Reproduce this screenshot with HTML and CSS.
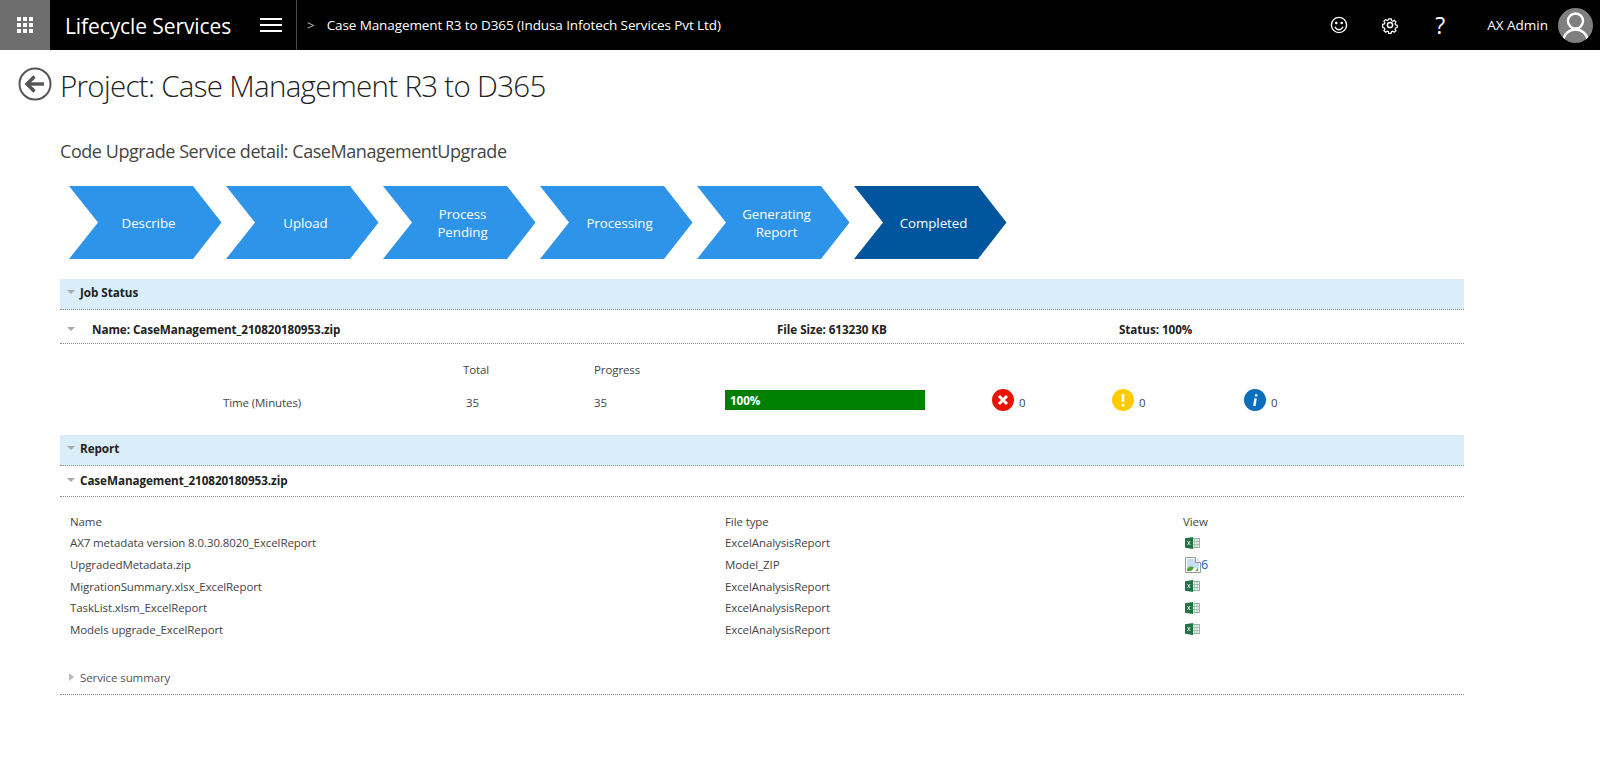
FILE: index.html
```html
<!DOCTYPE html>
<html lang="en">
<head>
<meta charset="utf-8">
<title>Lifecycle Services</title>
<link rel="stylesheet" href="styles.css">
</head>
<body>
<header class="topbar">
  <div class="tile">
    <svg width="16" height="16" viewBox="0 0 16 16" fill="#fff"><rect x="0" y="0" width="4" height="4"/><rect x="6" y="0" width="4" height="4"/><rect x="12" y="0" width="4" height="4"/><rect x="0" y="6" width="4" height="4"/><rect x="6" y="6" width="4" height="4"/><rect x="12" y="6" width="4" height="4"/><rect x="0" y="12" width="4" height="4"/><rect x="6" y="12" width="4" height="4"/><rect x="12" y="12" width="4" height="4"/></svg>
  </div>
  <div class="brand">Lifecycle Services</div>
  <div class="burger"><svg width="22" height="14" viewBox="0 0 22 14" stroke="#fff" stroke-width="2"><path d="M0 1h22M0 7h22M0 13h22"/></svg></div>
  <div class="crumb"><span class="crumb-sep">&gt;</span><span>Case Management R3 to D365 (Indusa Infotech Services Pvt Ltd)</span></div>
  <div class="top-actions">
    <svg class="ti ti-smile" width="18" height="18" viewBox="0 0 18 18" fill="none" stroke="#fff" stroke-width="1.4"><circle cx="9" cy="9" r="7.6"/><circle cx="6.3" cy="7" r=".6" fill="#fff"/><circle cx="11.7" cy="7" r=".6" fill="#fff"/><path d="M5 10.8c1 2 2.4 3 4 3s3-1 4-3"/></svg>
    <svg class="ti ti-gear" width="18" height="18" viewBox="0 0 18 18" fill="none" stroke="#fff" stroke-width="1.5"><path d="M7.4 1.5h3.2l.4 2.2 1.5.7 1.9-1.2 2 2.2-1.2 1.8.6 1.5 2.1.5v2.9l-2.1.5-.6 1.500 1.200 1.800-2.200 2-1.800-1.200-1.500.6-.5 2.100H7.400l-.4-2.100-1.500-.6-1.800 1.200-2.200-2 1.200-1.800-.6-1.500-2.100-.5V8.200l2.100-.5.600-1.500-1.200-1.800 2-2.200 1.900 1.200 1.500-.7z" transform="translate(1.700 1.700) scale(.81)"/><circle cx="9" cy="9" r="2.600"/></svg>
    <span class="help">?</span>
    <span class="user">AX Admin</span>
    <svg class="avatar" width="35" height="35" viewBox="0 0 35 35"><defs><clipPath id="avc"><circle cx="17.500" cy="17.500" r="17.500"/></clipPath></defs><circle cx="17.500" cy="17.500" r="17.500" fill="#7f7f7f"/><g clip-path="url(#avc)" fill="none" stroke="#fff" stroke-width="2.400"><circle cx="17.500" cy="13" r="7.500"/><path d="M5 33c1-7 6-11.500 12.500-11.500S29 26 30 33"/></g></svg>
  </div>
</header>

<main class="page">
  <div class="title-row">
    <svg class="back" width="34" height="34" viewBox="0 0 34 34" fill="none"><circle cx="17" cy="17" r="15.500" stroke="#555" stroke-width="2"/><path d="M9 17h17" stroke="#555" stroke-width="3.400"/><path d="M16.500 9.500 9 17l7.500 7.500" stroke="#555" stroke-width="3.400"/></svg>
    <h1 class="title">Project: Case Management R3 to D365</h1>
  </div>
  <div class="content">
    <h2 class="subtitle">Code Upgrade Service detail: CaseManagementUpgrade</h2>
    <ol class="steps">
      <li class="step">Describe</li>
      <li class="step">Upload</li>
      <li class="step">Process<br>Pending</li>
      <li class="step">Processing</li>
      <li class="step">Generating<br>Report</li>
      <li class="step current">Completed</li>
    </ol>

    <section>
      <div class="band"><i class="caret"></i>Job Status</div>
      <div class="job-row">
        <i class="caret"></i>
        <span class="job-name">Name: CaseManagement_210820180953.zip</span>
        <span class="job-size">File Size: 613230 KB</span>
        <span>Status: 100%</span>
      </div>
      <div class="metrics">
        <span class="m-total m-top">Total</span>
        <span class="m-prog m-top">Progress</span>
        <span class="m-name m-low">Time (Minutes)</span>
        <span class="m-total m-low m-num">35</span>
        <span class="m-prog m-low">35</span>
        <div class="bar">100%</div>
        <div class="stat s1"><svg width="22" height="22" viewBox="0 0 22 22"><circle cx="11" cy="11" r="11" fill="#e81400"/><path d="M7 7l8 8M15 7l-8 8" stroke="#fff" stroke-width="3"/></svg><span>0</span></div>
        <div class="stat s2"><svg width="22" height="22" viewBox="0 0 22 22"><circle cx="11" cy="11" r="11" fill="#ffcb00"/><path d="M11 5v8M11 15v2.500" stroke="#fff" stroke-width="2.600"/></svg><span>0</span></div>
        <div class="stat s3"><svg width="22" height="22" viewBox="0 0 22 22"><circle cx="11" cy="11" r="11" fill="#0a6ebd"/><path d="M12.200 5.200v2.400M11.600 9.500l-1.300 7.500" stroke="#fff" stroke-width="2.400"/></svg><span>0</span></div>
      </div>
    </section>

    <section>
      <div class="band band-report"><i class="caret"></i>Report</div>
      <div class="file-row"><i class="caret"></i>CaseManagement_210820180953.zip</div>
      <table class="files">
        <thead><tr><th>Name</th><th>File type</th><th>View</th></tr></thead>
        <tbody>
          <tr><td>AX7 metadata version 8.0.30.8020_ExcelReport</td><td>ExcelAnalysisReport</td><td><svg class="xl" width="15" height="12" viewBox="0 0 15 12"><use href="#excel"/></svg></td></tr>
          <tr><td>UpgradedMetadata.zip</td><td>Model_ZIP</td><td><div class="broken"><svg width="16" height="16" viewBox="0 0 16 16"><path d="M.5.500h10l5 5v10H.5z" fill="#fff" stroke="#9a9a9a"/><path d="M2 2h8v4h4v5L2 11z" fill="#c5def5"/><path d="M2 14v-2c2-3 5-3 7-1l-3 3z" fill="#4da53a"/><path d="M10 14l3-3v3z" fill="#4da53a"/><path d="M10.500.500v5h5" fill="#fff" stroke="#9a9a9a"/></svg><span>6</span></div></td></tr>
          <tr><td>MigrationSummary.xlsx_ExcelReport</td><td>ExcelAnalysisReport</td><td><svg class="xl" width="15" height="12" viewBox="0 0 15 12"><use href="#excel"/></svg></td></tr>
          <tr><td>TaskList.xlsm_ExcelReport</td><td>ExcelAnalysisReport</td><td><svg class="xl" width="15" height="12" viewBox="0 0 15 12"><use href="#excel"/></svg></td></tr>
          <tr><td>Models upgrade_ExcelReport</td><td>ExcelAnalysisReport</td><td><svg class="xl" width="15" height="12" viewBox="0 0 15 12"><use href="#excel"/></svg></td></tr>
        </tbody>
      </table>
      <div class="summary"><i class="caret closed"></i>Service summary</div>
    </section>
  </div>
</main>

<svg width="0" height="0" class="defs"><defs><g id="excel"><rect x="7" y="1.500" width="7.500" height="9" fill="#eef5f1" stroke="#8fb8a3"/><path d="M9.500 1.500v9M12 1.500v9M7 4.500h7.500M7 7.500h7.500" stroke="#8fb8a3" stroke-width=".7"/><path d="M0 1.200 8 0v12L0 10.800z" fill="#217346"/><path d="M2.500 4l2.600 4M5.100 4 2.500 8" stroke="#cfe3d7" stroke-width="1"/></g></defs></svg>
</body>
</html>
```
FILE: styles.css
```css
* { box-sizing: border-box; }
html, body { margin: 0; padding: 0; }
body { font-family: "Open Sans", "Liberation Sans", sans-serif; font-size: 11.500px; letter-spacing: -.1px; color: #444; background: #fff; overflow: hidden; }
.defs { position: absolute; }

.topbar { display: flex; align-items: center; height: 50px; background: #000; color: #fff; letter-spacing: 0; }
.tile { width: 50px; height: 50px; background: #6e6e6e; display: flex; align-items: center; justify-content: center; }
.brand { font-size: 21px; margin-left: 15px; width: 181px; letter-spacing: -.1px; padding-top: 1px; }
.burger { width: 51px; height: 50px; display: flex; align-items: center; padding-left: 14px; border-right: 1px solid #4a4a4a; }
.crumb { display: flex; align-items: center; gap: 12px; font-size: 13.500px; margin-left: 10px; letter-spacing: -.1px; font-weight: 500; }
.crumb-sep { color: #bbb; }
.top-actions { margin-left: auto; display: flex; align-items: center; padding-right: 7px; }
.ti-smile { margin-right: 33px; }
.ti-gear { margin-right: 31px; }
.help { font-size: 23px; width: 20px; text-align: center; margin-right: 37px; }
.user { font-size: 13.500px; margin-right: 10px; }
.avatar { display: block; }

.title-row { display: flex; align-items: center; padding: 0 0 0 18px; height: 72px; gap: 8px; }
.back { margin-bottom: 4px; }
.title { margin: 0 0 2px; font-size: 29.500px; font-weight: 300; color: #222; letter-spacing: -.7px; white-space: nowrap; }
.content { width: 1404px; margin-left: 60px; }
.subtitle { margin: 17px 0 0; font-size: 18px; line-height: 24px; font-weight: 400; color: #444; letter-spacing: -.45px; }

.steps { list-style: none; margin: 23px 0 0; padding: 0 0 0 9px; display: flex; gap: 4px; }
.step { width: 153px; height: 73px; display: flex; align-items: center; justify-content: center; text-align: center; padding-left: 6px; background: #2e94e9; color: #fff; font-size: 13.300px; letter-spacing: -.05px; line-height: 18px; clip-path: polygon(0 0, 124px 0, 152.500px 50%, 124px 100%, 0 100%, 29px 50%); }
.step.current { background: #00559f; }

.band { display: flex; align-items: center; height: 31px; background: #d9eef8; border-bottom: 1px dotted #888; font-size: 11.700px; letter-spacing: -.05px; font-weight: 700; color: #222; padding: 0 0 4px 7px; margin-top: 20px; }
.band-report { margin-top: 16px; }
.caret { display: inline-block; width: 0; height: 0; border-left: 4px solid transparent; border-right: 4px solid transparent; border-top: 4px solid #aaa; margin-right: 5px; }
.caret.closed { border-top: 4px solid transparent; border-bottom: 4px solid transparent; border-left: 5px solid #bbb; border-right: 0; margin-left: 2px; margin-right: 6px; }
.job-row { display: flex; align-items: center; height: 34px; border-bottom: 1px dotted #888; padding: 4px 0 0 7px; font-size: 11.700px; letter-spacing: -.07px; font-weight: 700; color: #222; }
.job-name { margin-left: 12px; width: 685px; }
.job-size { width: 342px; }

.metrics { display: grid; grid-template-columns: 403px 131px 131px 267px 120px 132px 1fr; grid-template-rows: 24px 38px; align-items: center; padding-top: 13px; }
.m-top { grid-row: 1; }
.m-low { grid-row: 2; padding-top: 4px; }
.m-name { grid-column: 1; padding-left: 163px; }
.m-total { grid-column: 2; }
.m-num { padding-left: 3px; }
.m-prog { grid-column: 3; }
.bar { grid-column: 4; grid-row: 2; width: 200px; height: 20px; background: #008000; color: #fff; font-size: 11.700px; font-weight: 700; padding-left: 5px; line-height: 20px; }
.stat { grid-row: 2; display: flex; align-items: center; gap: 5px; }
.stat span { padding-top: 4px; }
.s1 { grid-column: 5; }
.s2 { grid-column: 6; }
.s3 { grid-column: 7; }

.file-row { display: flex; align-items: center; height: 31px; border-bottom: 1px dotted #888; padding: 0 0 2px 7px; font-size: 11.700px; letter-spacing: -.07px; font-weight: 700; color: #222; }
.files { border-collapse: collapse; margin-top: 14px; width: 1300px; table-layout: fixed; }
.files th, .files td { height: 21.600px; padding: 0 0 0 10px; text-align: left; font-weight: 400; color: #444; vertical-align: middle; }
.files th { height: 21.200px; }
.files th:nth-child(1) { width: 655px; }
.files th:nth-child(2) { width: 458px; }
.xl { display: block; margin-left: 2px; }
.broken { display: flex; align-items: center; color: #0563c1; font-size: 12.500px; margin-left: 2px; }
.summary { display: flex; align-items: center; height: 32px; margin-top: 22.600px; border-bottom: 1px dotted #888; padding: 0 0 2px 7px; color: #555; }
```
